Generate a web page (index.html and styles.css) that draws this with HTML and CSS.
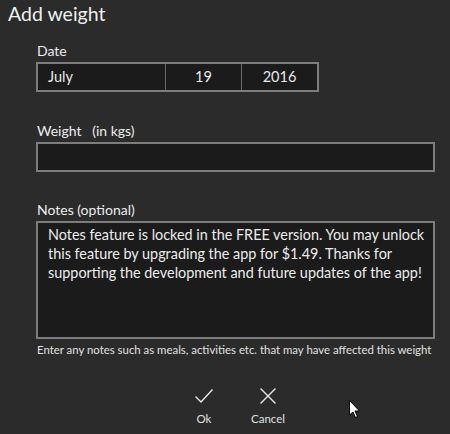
FILE: index.html
```html
<!DOCTYPE html>
<html>
<head>
<meta charset="utf-8">
<link rel="stylesheet" href="styles.css">
</head>
<body>
<div class="dialog">
  <h1 class="title">Add weight</h1>
  <div class="form">
    <div class="field date-field">
      <div class="label">Date</div>
      <div class="date-box">
        <div class="seg month">July</div>
        <div class="seg day">19</div>
        <div class="seg year">2016</div>
      </div>
    </div>
    <div class="field weight-field">
      <div class="label">Weight&nbsp;&nbsp; (in kgs)</div>
      <div class="input"></div>
    </div>
    <div class="field notes-field">
      <div class="label">Notes (optional)</div>
      <div class="textarea">Notes feature is locked in the FREE version. You may unlock this feature by upgrading the app for $1.49. Thanks for supporting the development and future updates of the app!</div>
      <div class="hint">Enter any notes such as meals, activities etc. that may have affected this weight</div>
    </div>
  </div>
  <div class="actions">
    <div class="action ok">
      <svg class="icon" width="20" height="16" viewBox="0 0 20 16"><path d="M1.5 8.5 L7 14 L18.5 1.5" fill="none" stroke="#e8e8e8" stroke-width="1.4"/></svg>
      <span class="action-label">Ok</span>
    </div>
    <div class="action cancel">
      <svg class="icon" width="18" height="16" viewBox="0 0 18 16"><path d="M1.5 0.5 L16.5 15.5 M16.5 0.5 L1.5 15.5" fill="none" stroke="#e8e8e8" stroke-width="1.4"/></svg>
      <span class="action-label">Cancel</span>
    </div>
  </div>
  <svg class="cursor" width="12" height="19" viewBox="0 0 12 19"><path d="M0.5 0.5 L0.5 15 L4 12 L6.5 17.5 L8.5 16.5 L6 11 L10.5 11 Z" fill="#ffffff" stroke="#000" stroke-width="1"/></svg>
</div>
</body>
</html>
```
FILE: styles.css
```css
* {
  box-sizing: border-box;
}
html, body {
  margin: 0;
  padding: 0;
  background: #2b2b2b;
}
body {
  font-family: Lato, "Noto Sans", sans-serif;
  color: #e6e6e6;
  width: 450px;
  height: 434px;
  overflow: hidden;
}
.dialog {
  position: relative;
  width: 450px;
  height: 434px;
}
.title {
  margin: 0;
  padding: 1px 0 0 8px;
  font-size: 19.5px;
  font-weight: normal;
  line-height: 26px;
  color: #f0f0f0;
}
.form {
  padding: 16px 15px 0 36px;
  display: flex;
  flex-direction: column;
}
.label {
  font-size: 14px;
  line-height: 16px;
  padding-left: 1px;
  margin-bottom: 3px;
  color: #ececec;
}
.date-box {
  width: 283px;
  height: 30px;
  border: 2px solid #7d7d7d;
  background: #1b1b1b;
  display: flex;
}
.seg {
  font-size: 14.5px;
  line-height: 26px;
  color: #e8e8e8;
}
.month {
  width: 128px;
  padding-left: 10px;
  border-right: 1px solid #6a6a6a;
}
.day {
  width: 76px;
  text-align: center;
  border-right: 1px solid #6a6a6a;
}
.year {
  flex: 1;
  text-align: center;
}
.weight-field {
  margin-top: 31px;
}
.input {
  height: 30px;
  border: 2px solid #7d7d7d;
  background: #1b1b1b;
}
.notes-field {
  margin-top: 30px;
}
.textarea {
  height: 118px;
  border: 2px solid #7d7d7d;
  background: #1b1b1b;
  padding: 2px 2px 5px 10px;
  font-size: 14.4px;
  line-height: 19px;
  color: #ececec;
}
.hint {
  font-size: 11.4px;
  line-height: 14px;
  margin-top: 4px;
  padding-left: 1px;
  color: #e0e0e0;
  white-space: nowrap;
}
.actions {
  display: flex;
  justify-content: center;
  gap: 20px;
  margin-top: 31px;
  padding-left: 22px;
}
.action {
  display: flex;
  flex-direction: column;
  align-items: center;
  width: 44px;
}
.icon {
  display: block;
  margin-bottom: 8px;
}
.action-label {
  font-size: 11.5px;
  line-height: 14px;
  color: #e0e0e0;
}
.cursor {
  position: absolute;
  left: 349px;
  top: 400px;
}
```
